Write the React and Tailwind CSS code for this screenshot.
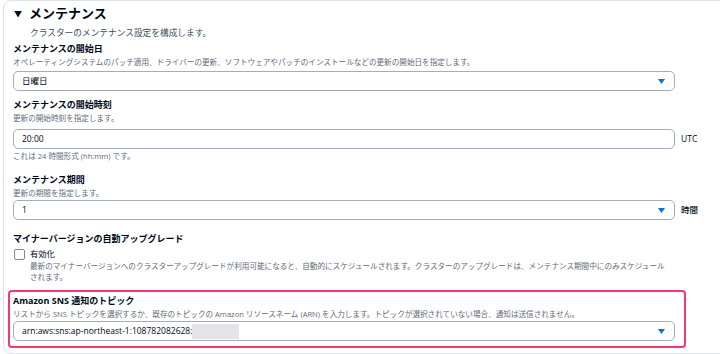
const font = { fontFamily: '"Open Sans", "Noto Sans CJK JP", sans-serif' };

const Arrow = () => (
    <svg width="7" height="5" viewBox="0 0 7 5" className="shrink-0">
        <path d="M0 0 H7 L3.5 5 Z" fill="#0972d3" />
    </svg>
);

const Field = ({ value, select, unit, children }) => (
    <div className="flex items-center">
        <div className="w-[662px] h-[20px] rounded-[5px] border border-[#a4aeba] bg-white flex items-center pl-[8px] pr-[9px]">
            <span className="flex-1 text-[8.5px] text-[#000716] flex items-center">
                {value}
                {children}
            </span>
            {select && <Arrow />}
        </div>
        {unit && <span className="ml-[6px] text-[8.5px] font-medium text-[#000716]">{unit}</span>}
    </div>
);

const Label = ({ children, className = "" }) => (
    <div className={`text-[9px] leading-[14px] font-bold text-[#000716] ${className}`}>{children}</div>
);

const Desc = ({ children, className = "" }) => (
    <div className={`text-[7.6px] leading-[12px] text-[#5f6b7a] ${className}`}>{children}</div>
);

export default function App() {
    return (
        <div className="w-[720px] h-[354px] overflow-hidden bg-white pl-[3px]" style={font}>
            <div className="w-[740px] border border-[#dfe3e8] rounded-[8px] pl-[9px] pb-[5px]">
                <div className="flex items-center h-[22px] mt-[2px]">
                    <span className="text-[8px] ml-[1px] w-[15px] text-[#000716]">▼</span>
                    <span className="text-[13px] font-bold text-[#000716]">メンテナンス</span>
                </div>
                <div className="pl-[17px] text-[8.7px] leading-[16px] text-[#414d5c]">
                    クラスターのメンテナンス設定を構成します。
                </div>

                <Label className="mt-[1px]">メンテナンスの開始日</Label>
                <Desc>オペレーティングシステムのパッチ適用、ドライバーの更新、ソフトウェアやパッチのインストールなどの更新の開始日を指定します。</Desc>
                <div className="mt-[3px]">
                    <Field value="日曜日" select />
                </div>

                <Label className="mt-[7px]">メンテナンスの開始時刻</Label>
                <Desc>更新の開始時刻を指定します。</Desc>
                <div className="mt-[5px]">
                    <Field value="20:00" unit="UTC" />
                </div>
                <Desc className="mt-[1px]">これは 24 時間形式 (hh:mm) です。</Desc>

                <Label className="mt-[11px]">メンテナンス期間</Label>
                <Desc>更新の期間を指定します。</Desc>
                <div className="mt-[1px]">
                    <Field value="1" select unit="時間" />
                </div>

                <Label className="mt-[12px]">マイナーバージョンの自動アップグレード</Label>
                <div className="flex items-center h-[14px] mt-[1px]">
                    <span className="w-[11px] h-[11px] ml-[1px] border border-[#7d8998] rounded-[2px] bg-white" />
                    <span className="ml-[5px] text-[8.3px] text-[#000716]">有効化</span>
                </div>
                <div className="pl-[17px] text-[7.6px] leading-[11px] text-[#5f6b7a]">
                    最新のマイナーバージョンへのクラスターアップグレードが利用可能になると、自動的にスケジュールされます。クラスターのアップグレードは、メンテナンス期間中にのみスケジュール
                    <br />
                    されます。
                </div>

                <div className="mt-[7px] -ml-[5px] w-[678px] border-2 border-[#f9366e] rounded-[4px] pl-[3px] pr-[9px] pt-[2px] pb-[5px]">
                    <Label>Amazon SNS 通知のトピック</Label>
                    <Desc>リストから SNS トピックを選択するか、既存のトピックの Amazon リソースネーム (ARN) を入力します。トピックが選択されていない場合、通知は送信されません。</Desc>
                    <div className="mt-[1px]">
                        <Field value="arn:aws:sns:ap-northeast-1:108782082628:" select>
                            <span className="inline-block w-[47px] h-[15px] bg-[#e4e4e6]" />
                        </Field>
                    </div>
                </div>
            </div>
        </div>
    );
}
